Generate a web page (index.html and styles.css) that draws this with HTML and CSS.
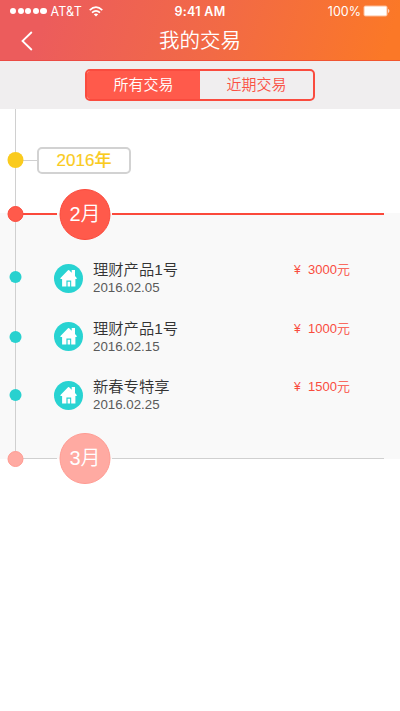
FILE: index.html
```html
<!DOCTYPE html>
<html lang="zh-CN">
<head>
<meta charset="utf-8">
<title>我的交易</title>
<link rel="stylesheet" href="styles.css">
</head>
<body>
<svg class="defs" width="0" height="0">
  <symbol id="house" viewBox="0 0 29 29">
    <path d="M6.500 14 14 6.200q.6-.6 1.200 0l2.500 2.500V6h3.300v6l1.700 2q.6 1-.6 1H21.400v7.500h-4.200v-6h-4.800v6H8.100V15H7q-1.200 0-.5-1z" fill="#fff"/>
    <path d="M13.600 22.500v-4.800h2.500v4.800z" fill="#fff"/>
  </symbol>
</svg>
<header class="header">
  <div class="status">
    <div class="carrier">
      <span class="signal"><i></i><i></i><i></i><i></i><i></i></span>
      <span class="network">AT&amp;T</span>
      <svg class="wifi" width="14" height="11" viewBox="0 0 14 11" fill="none" stroke="#fff" stroke-width="1.600">
        <path d="M.7 4.200Q7-1.800 13.300 4.200M3 6.600q4-3.600 8 0"/>
        <path d="M7 10.500 4.800 8.300q2.200-1.800 4.400 0z" fill="#fff" stroke="none"/>
      </svg>
    </div>
    <div class="time">9:41 AM</div>
    <div class="power">
      <span class="percent">100%</span>
      <svg width="27" height="12" viewBox="0 0 27 12">
        <rect x=".5" y=".5" width="24" height="11" rx="2" fill="#fff" fill-opacity=".5"/>
        <rect x="1.500" y="1.500" width="22" height="9" rx="1" fill="#fff"/>
        <path d="M25.300 3.800q2 2.200 0 4.400z" fill="#fff"/>
      </svg>
    </div>
  </div>
  <div class="nav">
    <svg class="back" width="12" height="20" viewBox="0 0 12 20" fill="none" stroke="#fff" stroke-width="1.800"><path d="M10.800 1 1.500 10l9.300 9"/></svg>
    <h1>我的交易</h1>
    <span></span>
  </div>
</header>
<div class="filter">
  <div class="segments">
    <button class="segment active">所有交易</button>
    <button class="segment">近期交易</button>
  </div>
</div>
<main class="timeline">
  <div class="row year">
    <span class="dot"></span><span class="link"></span><span class="year-label">2016年</span>
  </div>
  <div class="row month">
    <span class="dot"></span><span class="line lead"></span><span class="badge">2月</span><span class="line tail"></span>
  </div>
  <div class="items">
    <div class="row item">
      <span class="dot"></span>
      <svg class="icon"><use href="#house"/></svg>
      <div class="info"><div class="name">理财产品1号</div><div class="date">2016.02.05</div></div>
      <div class="price"><span class="yen">¥</span>3000元</div>
    </div>
    <div class="row item">
      <span class="dot"></span>
      <svg class="icon"><use href="#house"/></svg>
      <div class="info"><div class="name">理财产品1号</div><div class="date">2016.02.15</div></div>
      <div class="price"><span class="yen">¥</span>1000元</div>
    </div>
    <div class="row item">
      <span class="dot"></span>
      <svg class="icon"><use href="#house"/></svg>
      <div class="info"><div class="name">新春专特享</div><div class="date">2016.02.25</div></div>
      <div class="price"><span class="yen">¥</span>1500元</div>
    </div>
  </div>
  <div class="row month next">
    <span class="dot"></span><span class="line lead"></span><span class="badge">3月</span><span class="line tail"></span>
  </div>
</main>
</body>
</html>
```
FILE: styles.css
```css
* { box-sizing: border-box; }
body {
  margin: 0;
  min-height: 711px;
  background: #fff;
  font-family: "Liberation Sans", "Noto Sans CJK SC", sans-serif;
  font-weight: 350;
}
.defs { display: block; height: 0; }
.header {
  height: 61px;
  background: linear-gradient(108deg, #ec5c5c 12%, #f26a45 55%, #fb7827 96%);
  border-bottom: 1px solid rgba(235, 60, 50, .55);
  color: #fff;
}
.status {
  display: grid;
  grid-template-columns: 1fr auto 1fr;
  align-items: center;
  height: 22px;
  padding: 0 10px;
  font-family: Inter, "Liberation Sans", sans-serif;
  font-size: 12px;
  font-weight: 400;
}
.carrier { display: flex; align-items: center; }
.signal { display: flex; gap: 1.400px; }
.signal i { width: 6.200px; height: 6.200px; border-radius: 50%; background: #fff; }
.network { margin-left: 4px; font-size: 12.500px; letter-spacing: .2px; }
.wifi { margin-left: 7px; }
.time { font-weight: 600; font-size: 12.500px; letter-spacing: .3px; }
.percent { font-size: 12.500px; }
.power { display: flex; justify-content: flex-end; align-items: center; gap: 2px; }
.nav {
  display: grid;
  grid-template-columns: 40px 1fr 40px;
  align-items: center;
  height: 38px;
}
.back { margin-left: 21px; }
.nav h1 { margin: 0; font-size: 20.500px; line-height: 38px; font-weight: 350; text-align: center; }
.filter {
  display: flex;
  justify-content: center;
  height: 48px;
  padding-top: 8px;
  background: #f0eeef;
}
.segments {
  display: flex;
  width: 230px;
  height: 32px;
  border: 2px solid #fa4b3e;
  border-radius: 5px;
  overflow: hidden;
}
.segment {
  flex: 1;
  padding: 0;
  border: 0;
  background: none;
  color: #fa5145;
  font: 350 15px/28px "Liberation Sans", "Noto Sans CJK SC", sans-serif;
}
.segment.active { background: #ff5a4b; color: #fff; }
.timeline {
  height: 375px;
  background:
    linear-gradient(#d0d0d0, #d0d0d0) 15px 0 / 1px 349px no-repeat,
    linear-gradient(#f9f9f9, #f9f9f9) 0 104px / 100% 246px no-repeat;
}
.row { display: flex; align-items: center; }
.dot {
  flex: none;
  width: 16px;
  height: 16px;
  margin-left: 7px;
  border-radius: 50%;
  transform: translateX(.5px);
}
.year { height: 79px; padding-top: 23px; }
.year .dot { background: #facb1e; }
.link { width: 14px; height: 1px; background: #d0d0d0; }
.year-label {
  width: 94px;
  height: 27px;
  border: 2px solid #d2d2d2;
  border-radius: 5px;
  color: #facb1e;
  font-size: 17px;
  line-height: 24px;
  font-weight: 500;
  text-align: center;
  -webkit-text-stroke: .2px #facb1e;
}
.month { height: 52px; }
.month .dot, .badge { background: #ff5a4b; border: 1px solid #fb493b; }
.line { height: 2px; background: #fb493b; }
.lead { width: 34px; }
.badge {
  flex: none;
  width: 51px;
  height: 51px;
  margin: 0 2px;
  border-radius: 50%;
  color: #fff;
  font-size: 20px;
  line-height: 49px;
  text-align: center;
  transform: translateX(.5px);
}
.tail { width: 272px; }
.items { padding: 9px 0 8px; }
.item { height: 58.500px; }
.item .dot { width: 12px; height: 12px; margin-left: 9px; background: #28d1cf; }
.item:first-child .dot { margin-bottom: 2px; }
.icon { flex: none; width: 29px; height: 29px; margin-left: 33px; border-radius: 50%; background: #28d3d2; }
.info { width: 190px; margin-left: 10px; }
.name { color: #333; font-size: 15.300px; line-height: 20px; }
.date { color: #5a5a5a; font-size: 13.300px; line-height: 16px; }
.price {
  align-self: flex-start;
  width: 60px;
  margin: 12px 0 0 11px;
  color: #f94c3e;
  font-size: 13px;
  line-height: 18px;
}
.yen { display: inline-block; width: 14px; font-size: 12px; }
.next .dot, .next .badge { background: #ffaaa2; border-color: #ff9b92; }
.next .line { height: 1px; background: #d0d0d0; }
```
